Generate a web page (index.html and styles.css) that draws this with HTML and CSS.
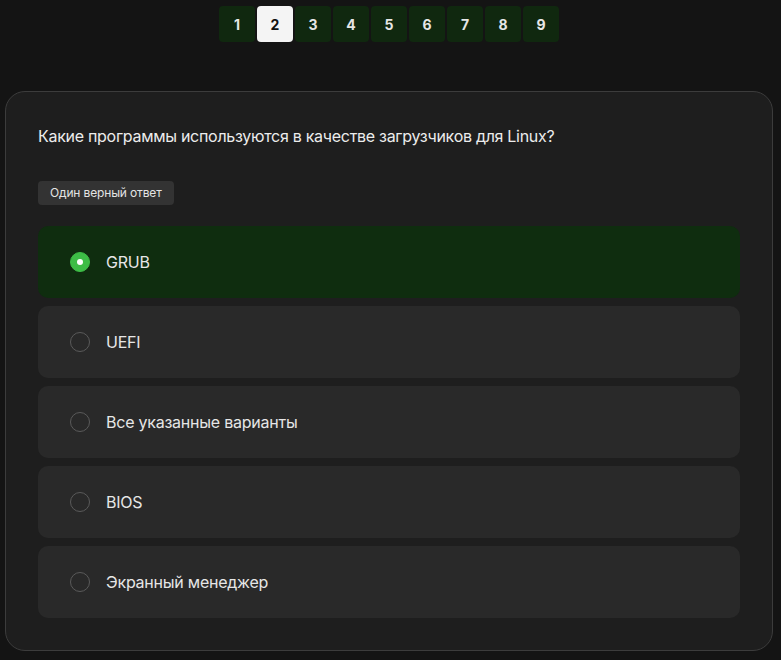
FILE: index.html
```html
<!DOCTYPE html>
<html lang="ru">
<head>
<meta charset="utf-8">
<link rel="stylesheet" href="styles.css">
</head>
<body>
<nav class="pager">
  <button class="page">1</button>
  <button class="page active">2</button>
  <button class="page">3</button>
  <button class="page">4</button>
  <button class="page">5</button>
  <button class="page">6</button>
  <button class="page">7</button>
  <button class="page">8</button>
  <button class="page">9</button>
</nav>
<section class="card">
  <h1 class="question">Какие программы используются в качестве загрузчиков для Linux?</h1>
  <span class="badge">Один верный ответ</span>
  <div class="options">
    <div class="option selected"><span class="radio"></span><span class="label">GRUB</span></div>
    <div class="option"><span class="radio"></span><span class="label">UEFI</span></div>
    <div class="option"><span class="radio"></span><span class="label">Все указанные варианты</span></div>
    <div class="option"><span class="radio"></span><span class="label">BIOS</span></div>
    <div class="option"><span class="radio"></span><span class="label">Экранный менеджер</span></div>
  </div>
</section>
</body>
</html>
```
FILE: styles.css
```css
* { box-sizing: border-box; }
html, body { margin: 0; padding: 0; }
body {
  background: #141414;
  font-family: Inter, "Noto Sans", sans-serif;
  color: #e8e8e8;
  width: 781px;
  height: 660px;
  overflow: hidden;
}
.pager {
  display: flex;
  justify-content: center;
  gap: 2px;
  padding-top: 6px;
  padding-right: 3px;
}
.page {
  width: 36px;
  height: 36px;
  border: none;
  border-radius: 4px;
  background: #10280f;
  color: #e6e6e6;
  font-family: Inter, sans-serif;
  font-weight: 700;
  font-size: 14px;
  padding: 0;
}
.page.active {
  background: #f4f4f4;
  color: #111;
}
.card {
  margin: 49px 8px 0 5px;
  background: #1e1e1e;
  border: 1px solid #3c3c3c;
  border-radius: 20px;
  padding: 32px;
}
.question {
  margin: 0;
  font-size: 16px;
  font-weight: 400;
  line-height: 24px;
  letter-spacing: -0.29px;
  color: #ececec;
}
.badge {
  display: inline-block;
  margin-top: 33px;
  background: #333333;
  color: #e4e4e4;
  font-size: 12px;
  line-height: 24px;
  letter-spacing: -0.15px;
  padding: 0 12px;
  border-radius: 4px;
}
.options {
  display: flex;
  flex-direction: column;
  gap: 8px;
  margin-top: 21px;
}
.option {
  height: 72px;
  background: #292929;
  border-radius: 10px;
  display: flex;
  align-items: center;
  padding-left: 32px;
  gap: 16px;
}
.option.selected {
  background: #0f2d0f;
}
.radio {
  width: 20px;
  height: 20px;
  border-radius: 50%;
  border: 1px solid #5a5a5a;
  flex: none;
  display: flex;
  align-items: center;
  justify-content: center;
}
.option.selected .radio {
  background: #3dbd46;
  border-color: #3dbd46;
}
.option.selected .radio::after {
  content: "";
  width: 6px;
  height: 6px;
  border-radius: 50%;
  background: #fff;
}
.label {
  font-size: 16px;
  letter-spacing: -0.24px;
  color: #e6e6e6;
}
```
